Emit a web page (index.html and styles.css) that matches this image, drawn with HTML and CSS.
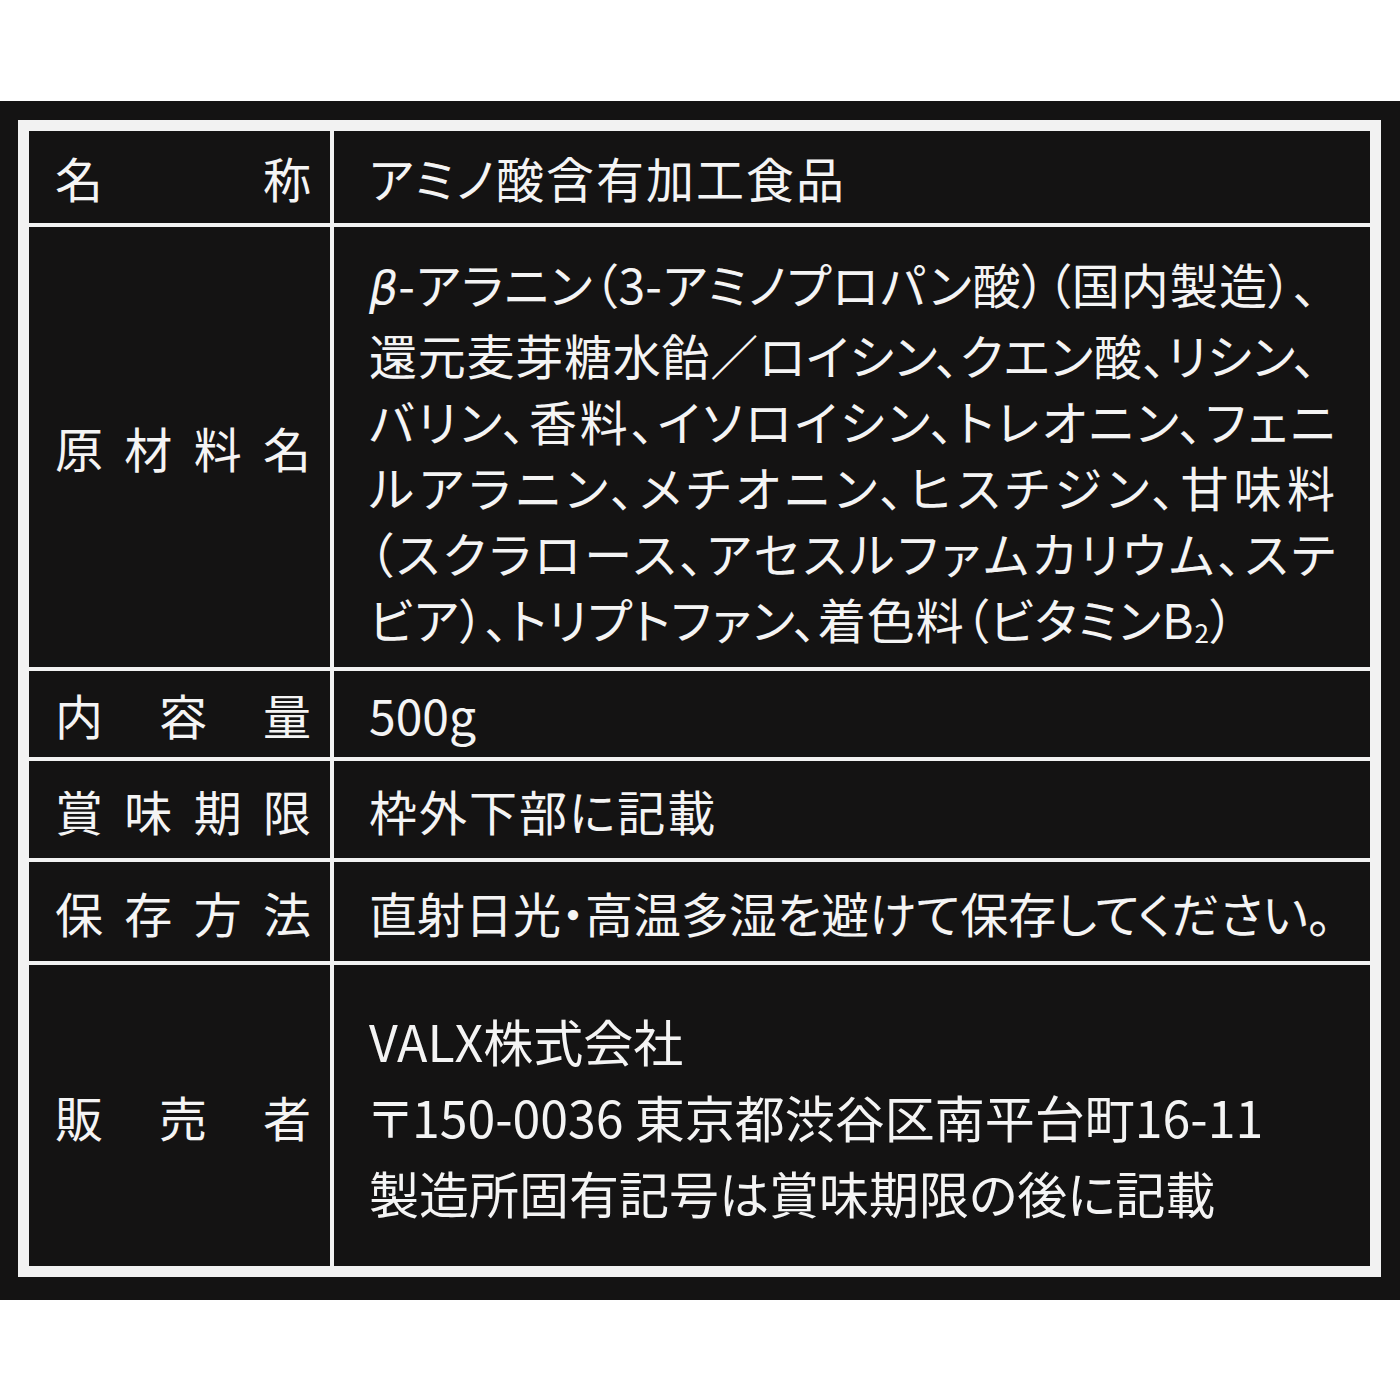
FILE: index.html
```html
<!DOCTYPE html>
<html lang="ja">
<head>
<meta charset="utf-8">
<title>食品表示</title>
<link rel="stylesheet" href="styles.css">
</head>
<body>
<div class="sheet">
  <div class="label-table">
    <div class="th r1"><span class="lbl">名称</span></div>
    <div class="td r1 wide">アミノ酸含有加工食品</div>

    <div class="th r2"><span class="lbl">原材料名</span></div>
    <div class="td r2 ingredients">
      <div class="lines">
        <span class="line comma-end"><span class="beta">β</span>-アラニン（3-アミノプロパン酸）（国内製造）、</span>
        <span class="line comma-end">還元麦芽糖水飴／ロイシン、クエン酸、リシン、</span>
        <span class="line">バリン、香料、イソロイシン、トレオニン、フェニ</span>
        <span class="line">ルアラニン、メチオニン、ヒスチジン、甘味料</span>
        <span class="line">（スクラロース、アセスルファムカリウム、ステ</span>
        <span class="line last">ビア）、トリプトファン、着色料（ビタミンB<span class="sub">2</span>）</span>
      </div>
    </div>

    <div class="th r3"><span class="lbl">内容量</span></div>
    <div class="td r3">500g</div>

    <div class="th r4"><span class="lbl">賞味期限</span></div>
    <div class="td r4 wide">枠外下部に記載</div>

    <div class="th r5"><span class="lbl">保存方法</span></div>
    <div class="td r5">直射日光・高温多湿を避けて保存してください。</div>

    <div class="th r6"><span class="lbl">販売者</span></div>
    <div class="td r6 seller">
      <p>VALX株式会社<br>〒150-0036 東京都渋谷区南平台町16-11<br>製造所固有記号は賞味期限の後に記載</p>
    </div>
  </div>
</div>
</body>
</html>
```
FILE: styles.css
```css
html, body {
  margin: 0;
  padding: 0;
  background: #ffffff;
}

body {
  font-family: "Noto Sans CJK JP", "Noto Sans", sans-serif;
  color: #f4f4f4;
}

.sheet {
  margin-top: 101px;
  height: 1199px;
  background: #141313;
  padding: 19px 0 0 18px;
  box-sizing: border-box;
}

.label-table {
  width: 1363px;
  box-sizing: border-box;
  border: 11px solid #f2f2f2;
  background: #f2f2f2;
  display: grid;
  grid-template-columns: 301px 1036px;
  grid-template-rows: 92px 440px 86px 97px 99px 301px;
  column-gap: 4px;
  row-gap: 4px;
}

.th, .td {
  background: #141313;
  display: flex;
  align-items: center;
  font-size: 48px;
  line-height: 1;
  white-space: nowrap;
  font-feature-settings: "palt" 1;
}

.th {
  padding-left: 26px;
}

.lbl {
  display: block;
  width: 256px;
  text-align: justify;
  text-align-last: justify;
  font-feature-settings: normal;
}

.td {
  padding-left: 35px;
}

.wide {
  letter-spacing: 2px;
}

.td p {
  margin: 0;
}

.lines {
  width: 966px;
  padding-top: 6px;
}

.line {
  display: block;
  line-height: 66px;
  text-align: justify;
  text-align-last: justify;
}

.line.comma-end {
  width: 948px;
}

.line.last {
  text-align-last: left;
  letter-spacing: 1px;
}

.seller p {
  font-size: 50px;
  line-height: 76px;
}

.beta {
  font-family: "DejaVu Sans", sans-serif;
  font-style: italic;
  font-size: 46px;
}

.sub {
  font-size: 26px;
  vertical-align: -4px;
  line-height: 0;
}
```
